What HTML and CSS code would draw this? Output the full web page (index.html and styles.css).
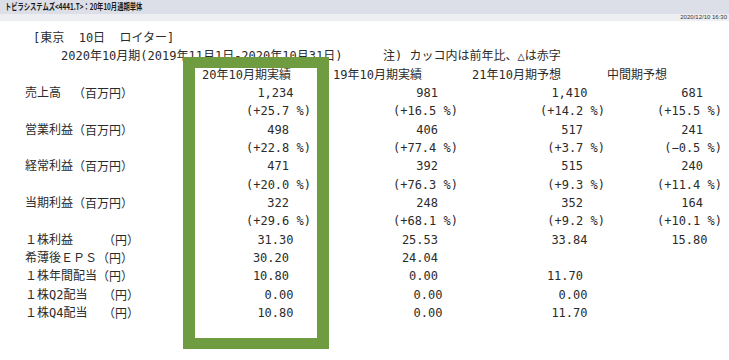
FILE: index.html
```html
<!DOCTYPE html>
<html lang="ja">
<head>
<meta charset="utf-8">
<title>トビラシステムズ 20年10月通期単体</title>
<link rel="stylesheet" href="styles.css">
</head>
<body>
<header class="topbar"><div class="title">トビラシステムズ&lt;4441.T&gt;：20年10月通期単体</div></header>
<div class="subbar"><span class="stamp">2020/12/10 16:30</span></div>
<main class="report">
  <div class="line l-source">[東京  10日  ロイター]</div>
  <div class="line l-period"><span class="period">2020年10月期(2019年11月1日-2020年10月31日)</span><span class="note">注) カッコ内は前年比、△は赤字</span></div>
  <div class="row head"><span></span><span class="h">20年10月期実績</span><span class="h">19年10月期実績</span><span class="h">21年10月期予想</span><span class="h">中間期予想</span></div>

  <div class="row"><span class="lab"><span class="name n4">売上高</span><span class="unit">（百万円）</span></span><span class="v sh">1,234</span><span class="v">981</span><span class="v sh">1,410</span><span class="v">681</span></div>
  <div class="row"><span class="lab"></span><span class="p">(+25.7 %)</span><span class="p">(+16.5 %)</span><span class="p">(+14.2 %)</span><span class="p">(+15.5 %)</span></div>
  <div class="row"><span class="lab"><span class="name n4">営業利益</span><span class="unit">（百万円）</span></span><span class="v">498</span><span class="v">406</span><span class="v">517</span><span class="v">241</span></div>
  <div class="row"><span class="lab"></span><span class="p">(+22.8 %)</span><span class="p">(+77.4 %)</span><span class="p">(+3.7 %)</span><span class="p">(−0.5 %)</span></div>
  <div class="row"><span class="lab"><span class="name n4">経常利益</span><span class="unit">（百万円）</span></span><span class="v">471</span><span class="v">392</span><span class="v">515</span><span class="v">240</span></div>
  <div class="row"><span class="lab"></span><span class="p">(+20.0 %)</span><span class="p">(+76.3 %)</span><span class="p">(+9.3 %)</span><span class="p">(+11.4 %)</span></div>
  <div class="row"><span class="lab"><span class="name n4">当期利益</span><span class="unit">（百万円）</span></span><span class="v">322</span><span class="v">248</span><span class="v">352</span><span class="v">164</span></div>
  <div class="row"><span class="lab"></span><span class="p">(+29.6 %)</span><span class="p">(+68.1 %)</span><span class="p">(+9.2 %)</span><span class="p">(+10.1 %)</span></div>

  <div class="row"><span class="lab"><span class="name n7">１株利益</span><span class="unit">（円）</span></span><span class="v sh">31.30</span><span class="v">25.53</span><span class="v sh">33.84</span><span class="v sh">15.80</span></div>
  <div class="row"><span class="lab"><span class="name n6">希薄後ＥＰＳ</span><span class="unit">（円）</span></span><span class="v">30.20</span><span class="v">24.04</span><span class="v"></span><span class="v"></span></div>
  <div class="row"><span class="lab"><span class="name n6">１株年間配当</span><span class="unit">（円）</span></span><span class="v">10.80</span><span class="v">0.00</span><span class="v">11.70</span><span class="v"></span></div>
  <div class="row"><span class="lab"><span class="name n7">１株Q2配当</span><span class="unit">（円）</span></span><span class="v sh">0.00</span><span class="v sh">0.00</span><span class="v sh">0.00</span><span class="v"></span></div>
  <div class="row"><span class="lab"><span class="name n7">１株Q4配当</span><span class="unit">（円）</span></span><span class="v sh">10.80</span><span class="v sh">0.00</span><span class="v sh">11.70</span><span class="v"></span></div>

  <div class="highlight" aria-hidden="true"></div>
</main>
</body>
</html>
```
FILE: styles.css
```css
html, body {
  margin: 0;
  padding: 0;
  background: #ffffff;
}

body {
  min-height: 360px;
}

.topbar {
  height: 14px;
  background: #dcdfe7;
  display: flex;
  align-items: center;
  padding-left: 5px;
  overflow: hidden;
}

.title {
  font-family: "Noto Sans CJK JP", "Liberation Sans", sans-serif;
  font-weight: 700;
  font-size: 9px;
  line-height: 14px;
  color: #1a1a1a;
  white-space: nowrap;
  transform: scaleX(0.7);
  transform-origin: left center;
}

.subbar {
  height: 7px;
  background: #eceef2;
  display: flex;
  justify-content: flex-end;
  align-items: center;
  padding-right: 2px;
}

.stamp {
  font-family: "Liberation Sans", "DejaVu Sans", sans-serif;
  font-size: 6px;
  line-height: 7px;
  color: #333;
  white-space: nowrap;
}

.report {
  position: relative;
  padding: 8px 0 40px 25px;
  font-family: "DejaVu Sans Mono", "Noto Sans CJK JP", monospace;
  font-size: 12px;
  line-height: 18.35px;
  color: #2b2b2b;
}

.line {
  white-space: pre;
}

.l-source {
  padding-left: 8px;
}

.l-period {
  padding-left: 36px;
  display: flex;
}

.period {
  width: 322px;
  flex: none;
}

.row {
  display: grid;
  grid-template-columns: 165px 121px 147px 147px 117px;
  white-space: pre;
  height: 18.35px;
}

.lab {
  display: flex;
}

.name {
  flex: none;
}

.name.n4 { width: 48px; }
.name.n6 { width: 72px; }
.name.n7 { width: 78px; }

.unit {
  font-family: "Noto Sans CJK JP", sans-serif;
}

.v, .p {
  text-align: right;
}

.v {
  --pr: 22px;
  --sh: 0px;
  padding-right: calc(var(--pr) - var(--sh));
}

.v.sh {
  --sh: 4.5px;
}

.row > .v:nth-child(3) { --pr: 20px; }
.row > .v:nth-child(4) { --pr: 22px; }
.row > .v:nth-child(5) { --pr: 19px; }

.head .h:nth-child(2) { padding-left: 12px; }
.head .h:nth-child(3) { padding-left: 22px; }
.head .h:nth-child(4) { padding-left: 14px; }
.head .h:nth-child(5) { padding-left: 2px; }

.highlight {
  position: absolute;
  left: 183px;
  top: 36px;
  width: 146px;
  height: 292px;
  box-sizing: border-box;
  border-style: solid;
  border-color: #6f9b41;
  border-width: 11px 12px;
}
```
